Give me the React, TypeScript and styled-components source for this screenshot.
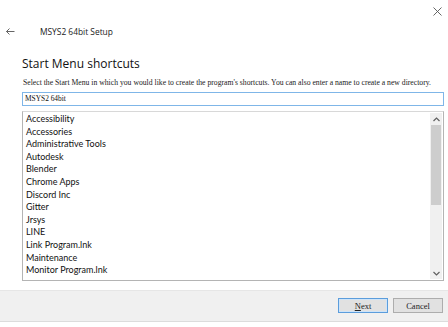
import styled, { createGlobalStyle } from "styled-components"

const Global = createGlobalStyle`
    html, body {
        margin: 0;
        padding: 0;
        background: #ffffff;
    }
    body {
        width: 448px;
        height: 327px;
        overflow: hidden;
    }
`

const Window = styled.div`
    width: 448px;
    height: 327px;
    display: flex;
    flex-direction: column;
    background: #ffffff;
    font-family: "Open Sans", "Noto Sans", sans-serif;
`

const CloseBar = styled.div`
    height: 16px;
    display: flex;
    justify-content: flex-end;
    align-items: flex-end;
    padding-right: 6px;
`

const HeaderRow = styled.div`
    height: 20px;
    margin-top: 5px;
    display: flex;
    align-items: center;
`

const BackArrow = styled.div`
    width: 40px;
    padding-left: 6px;
    box-sizing: border-box;
    display: flex;
    align-items: center;
`

const Title = styled.div`
    font-size: 8.4px;
    color: #1a1a1a;
`

const Content = styled.div`
    padding: 0 4px 0 22px;
    display: flex;
    flex-direction: column;
`

const Heading = styled.div`
    margin-top: 15px;
    font-size: 12px;
    line-height: 16px;
    color: #111111;
`

const Description = styled.div`
    margin-top: 5px;
    font-family: "Liberation Serif", serif;
    font-size: 7.7px;
    line-height: 11px;
    color: #222222;
    padding-left: 1px;
    white-space: nowrap;
`

const NameInput = styled.div`
    margin-top: 4px;
    height: 14px;
    border: 1px solid #7fb6e8;
    box-sizing: border-box;
    font-family: "Liberation Serif", serif;
    font-size: 7.4px;
    line-height: 12px;
    padding-left: 2px;
    color: #111111;
`

const ListBox = styled.div`
    margin-top: 5px;
    height: 170px;
    border: 1px solid #b4b4b4;
    border-top-color: #d8d8d8;
    box-sizing: border-box;
    display: flex;
`

const Items = styled.div`
    flex: 1;
    padding: 1px 0 0 3px;
    display: flex;
    flex-direction: column;
`

const Item = styled.div`
    font-family: Lato, "Noto Sans", sans-serif;
    font-size: 9px;
    line-height: 12.6px;
    height: 12.6px;
    color: #111111;
`

const ScrollBar = styled.div`
    width: 12px;
    margin: 1px 1px 1px 0;
    background: #f0f0f0;
    display: flex;
    flex-direction: column;
    align-items: center;
`

const ScrollArrow = styled.div`
    height: 12px;
    width: 12px;
    display: flex;
    align-items: center;
    justify-content: center;
`

const Thumb = styled.div`
    width: 10px;
    height: 80px;
    background: #cdcdcd;
`

const Footer = styled.div`
    margin-top: 9px;
    height: 32px;
    background: #f0f0f0;
    border-top: 1px solid #e6e6e6;
    border-bottom: 1px solid #dcdcdc;
    box-sizing: border-box;
    display: flex;
    justify-content: flex-end;
    align-items: center;
    gap: 5px;
    padding: 0 5px 1px 0;
`

const Button = styled.div<{ focused?: boolean }>`
    width: 50px;
    height: 15px;
    box-sizing: border-box;
    background: #e1e1e1;
    border: 1px solid ${({ focused }) => (focused ? "#5b9ddc" : "#adadad")};
    box-shadow: ${({ focused }) => (focused ? "inset 0 0 0 1px #cfe4f8" : "none")};
    font-family: "Liberation Serif", serif;
    font-size: 8.5px;
    color: #222222;
    display: flex;
    align-items: center;
    justify-content: center;
    u {
        text-decoration-thickness: 0.5px;
    }
`

const items = [
    "Accessibility",
    "Accessories",
    "Administrative Tools",
    "Autodesk",
    "Blender",
    "Chrome Apps",
    "Discord Inc",
    "Gitter",
    "Jrsys",
    "LINE",
    "Link Program.lnk",
    "Maintenance",
    "Monitor Program.lnk",
]

export default function App() {
    return (
        <Window>
            <Global />
            <CloseBar>
                <svg width="9" height="9" viewBox="0 0 9 9">
                    <path d="M0.5 0.5 L8.5 8.5 M8.5 0.5 L0.5 8.5" stroke="#555" strokeWidth="0.9" fill="none" />
                </svg>
            </CloseBar>
            <HeaderRow>
                <BackArrow>
                    <svg width="9" height="7" viewBox="0 0 9 7">
                        <path d="M0.5 3.5 H8.5 M3.5 0.5 L0.5 3.5 L3.5 6.5" stroke="#555" strokeWidth="0.9" fill="none" />
                    </svg>
                </BackArrow>
                <Title>MSYS2 64bit Setup</Title>
            </HeaderRow>
            <Content>
                <Heading>Start Menu shortcuts</Heading>
                <Description>
                    Select the Start Menu in which you would like to create the program's shortcuts. You can also enter a name to create a new directory.
                </Description>
                <NameInput>MSYS2 64bit</NameInput>
                <ListBox>
                    <Items>
                        {items.map(i => (
                            <Item key={i}>{i}</Item>
                        ))}
                    </Items>
                    <ScrollBar>
                        <ScrollArrow>
                            <svg width="7" height="5" viewBox="0 0 7 5">
                                <path d="M0.5 4 L3.5 1 L6.5 4" stroke="#606060" strokeWidth="1.2" fill="none" />
                            </svg>
                        </ScrollArrow>
                        <Thumb />
                        <div style={{ flex: 1 }} />
                        <ScrollArrow>
                            <svg width="7" height="5" viewBox="0 0 7 5">
                                <path d="M0.5 1 L3.5 4 L6.5 1" stroke="#606060" strokeWidth="1.2" fill="none" />
                            </svg>
                        </ScrollArrow>
                    </ScrollBar>
                </ListBox>
            </Content>
            <Footer>
                <Button focused>
                    <span><u>N</u>ext</span>
                </Button>
                <Button>Cancel</Button>
            </Footer>
        </Window>
    )
}
